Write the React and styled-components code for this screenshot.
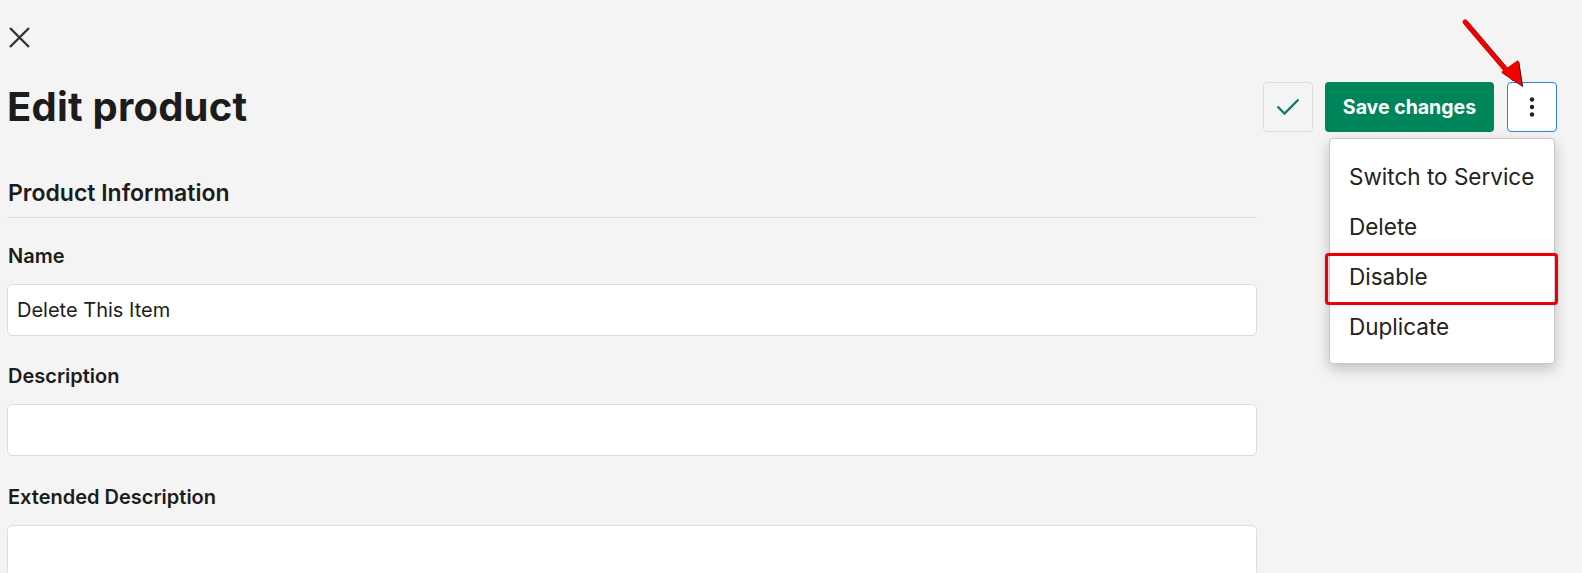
import React from "react";
import styled, { createGlobalStyle } from "styled-components";

const Global = createGlobalStyle`
  html, body { margin: 0; padding: 0; background: #f4f4f4; }
  body { font-family: Inter, Lato, "Noto Sans", sans-serif; color: #1c1c1c; }
  * { box-sizing: border-box; }
`;

const Page = styled.div`
  position: relative;
  padding: 27px 25px 0 7px;
  height: 573px;
  overflow: hidden;
`;

const CloseButton = styled.button`
  display: block;
  width: 23px;
  height: 22px;
  padding: 0;
  margin: 0 0 0 1px;
  border: none;
  background: none;
  color: #333;
`;

const HeaderRow = styled.div`
  display: flex;
  align-items: center;
  justify-content: space-between;
  margin-top: 33px;
  height: 50px;
`;

const Title = styled.h1`
  margin: 0;
  font-size: 40px;
  letter-spacing: 0.2px;
  line-height: 50px;
  font-weight: 700;
  color: #1c1c1c;
`;

const Actions = styled.div`
  display: flex;
  align-items: center;
  gap: 12px;
`;

const IconButton = styled.button`
  width: 50px;
  height: 50px;
  border-radius: 4px;
  border: 1px solid ${(p) => (p.$active ? "#2e7fe8" : "#dedede")};
  background: ${(p) => (p.$active ? "#ffffff" : "#f4f4f4")};
  display: flex;
  align-items: center;
  justify-content: center;
  padding: 0;
`;

const SaveButton = styled.button`
  height: 50px;
  width: 169px;
  border: none;
  border-radius: 4px;
  background: #00855a;
  color: #fff;
  font-family: Inter, sans-serif;
  font-size: 19.5px;
  font-weight: 700;
`;

const MoreWrap = styled.div`
  position: relative;
  margin-left: 1px;
`;

const Menu = styled.div`
  position: absolute;
  top: 56px;
  right: 2px;
  width: 226px;
  background: #fff;
  border: 1px solid #c9c9c9;
  border-radius: 4px;
  box-shadow: 0 5px 14px rgba(0, 0, 0, 0.22);
  padding: 13px 0 11px;
  z-index: 5;
`;

const MenuItem = styled.div`
  position: relative;
  height: 50px;
  line-height: 50px;
  padding-left: 19px;
  font-size: 22.5px;
  color: #222;
  white-space: nowrap;

  ${(p) =>
    p.$marked &&
    `
    &::after {
      content: "";
      position: absolute;
      left: -5px;
      right: -4px;
      top: 1px;
      height: 46px;
      border: 3px solid #e8000b;
      border-radius: 4px;
      box-shadow: 0 0 1px rgba(0,0,0,0.6);
    }
  `}
`;

const Form = styled.div`
  width: 1250px;
`;

const SectionTitle = styled.h2`
  margin: 47px 0 0;
  padding: 0 0 10px 1px;
  font-size: 23px;
  line-height: 28px;
  font-weight: 600;
  border-bottom: 1px solid #dcdcdc;
`;

const Field = styled.div`
  margin-top: ${(p) => p.$top}px;
`;

const Label = styled.label`
  display: block;
  padding-left: 1px;
  font-size: 20px;
  line-height: 24px;
  font-weight: 600;
  margin-bottom: 16px;
`;

const Input = styled.input`
  display: block;
  width: 100%;
  height: 52px;
  border: 1px solid #dedede;
  border-radius: 5px;
  background: #fff;
  padding: 0 9px;
  font-family: Inter, sans-serif;
  font-size: 20px;
  color: #1c1c1c;
  outline: none;
`;

const Arrow = styled.svg`
  position: absolute;
  left: 1440px;
  top: 10px;
  width: 100px;
  height: 90px;
  overflow: visible;
  z-index: 6;
`;

export default function App() {
  return (
    <>
      <Global />
      <Page>
        <CloseButton aria-label="Close">
          <svg width="23" height="22" viewBox="0 0 23 22">
            <path d="M2 1 L21 20 M21 1 L2 20" stroke="#333" strokeWidth="2.4" strokeLinecap="butt" />
          </svg>
        </CloseButton>
        <HeaderRow>
          <Title>Edit product</Title>
          <Actions>
            <IconButton aria-label="Done">
              <svg width="24" height="18" viewBox="0 0 24 18">
                <path d="M1.5 8.5 L8.5 15.5 L22.5 1.5" fill="none" stroke="#117b66" strokeWidth="2.3" />
              </svg>
            </IconButton>
            <SaveButton>Save changes</SaveButton>
            <MoreWrap>
              <IconButton $active aria-label="More">
                <svg width="6" height="20" viewBox="0 0 6 20">
                  <circle cx="3" cy="2.5" r="2.2" fill="#222" />
                  <circle cx="3" cy="10" r="2.2" fill="#222" />
                  <circle cx="3" cy="17.5" r="2.2" fill="#222" />
                </svg>
              </IconButton>
              <Menu>
                <MenuItem>Switch to Service</MenuItem>
                <MenuItem>Delete</MenuItem>
                <MenuItem $marked>Disable</MenuItem>
                <MenuItem>Duplicate</MenuItem>
              </Menu>
            </MoreWrap>
          </Actions>
        </HeaderRow>
        <Form>
          <SectionTitle>Product Information</SectionTitle>
          <Field $top={26}>
            <Label>Name</Label>
            <Input defaultValue="Delete This Item" />
          </Field>
          <Field $top={28}>
            <Label>Description</Label>
            <Input />
          </Field>
          <Field $top={29}>
            <Label>Extended Description</Label>
            <Input />
          </Field>
        </Form>
        <Arrow viewBox="0 0 100 90">
          <g transform="translate(1.2,1.2)">
            <line x1="25" y1="12" x2="72" y2="67" stroke="#3a0000" strokeWidth="5" strokeLinecap="round" />
            <polygon points="82,76 61,62 78,50" fill="#3a0000" />
          </g>
          <line x1="25" y1="12" x2="72" y2="67" stroke="#f00000" strokeWidth="5" strokeLinecap="round" />
          <polygon points="82,76 61,62 78,50" fill="#f00000" />
        </Arrow>
      </Page>
    </>
  );
}
